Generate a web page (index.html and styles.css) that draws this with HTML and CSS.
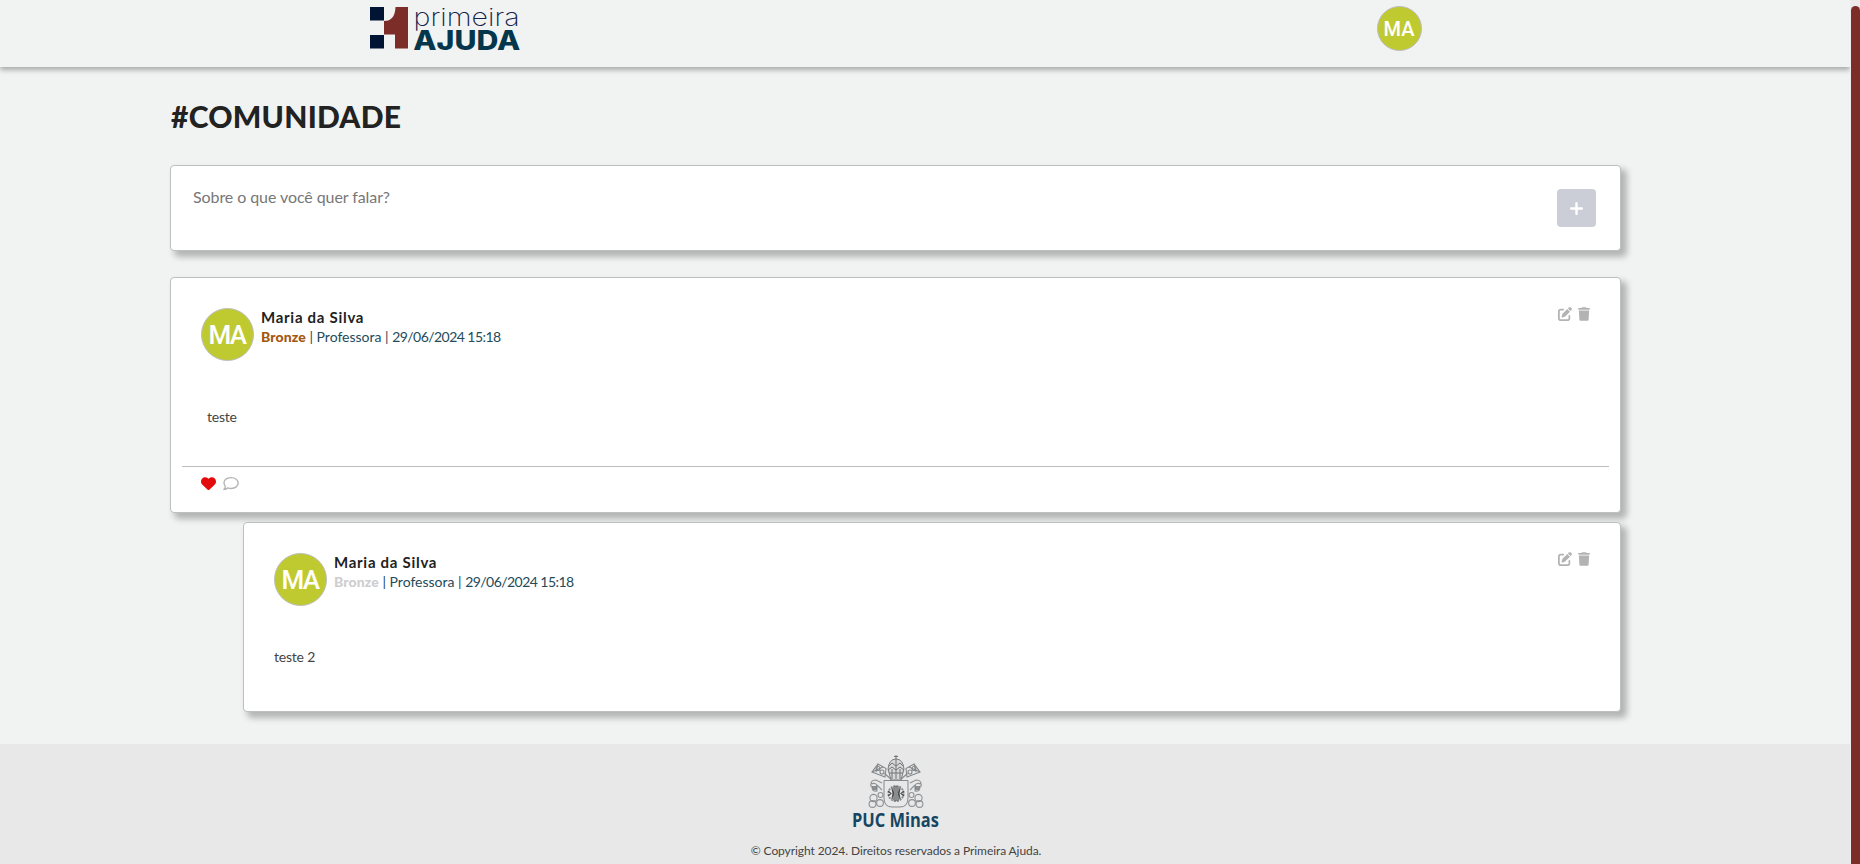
FILE: index.html
```
<!DOCTYPE html>
<html lang="pt-BR">
<head>
<meta charset="utf-8">
<title>Primeira Ajuda</title>
<link rel="stylesheet" href="styles.css">
</head>
<body>
<svg class="defs" width="0" height="0">
  <symbol id="edit" viewBox="0 0 512 512"><path d="M471.6 21.7c-21.9-21.9-57.3-21.9-79.2 0L362.3 51.7l97.9 97.9 30.1-30.1c21.9-21.9 21.9-57.3 0-79.2L471.6 21.7zm-299.2 220c-6.1 6.1-10.8 13.6-13.5 21.9l-29.6 88.8c-2.9 8.6-.6 18.1 5.8 24.6s15.9 8.7 24.6 5.8l88.8-29.6c8.2-2.7 15.7-7.4 21.9-13.5L437.7 172.3 339.7 74.3 172.4 241.7zM96 64C43 64 0 107 0 160V416c0 53 43 96 96 96H352c53 0 96-43 96-96V320c0-17.7-14.3-32-32-32s-32 14.3-32 32v96c0 17.7-14.3 32-32 32H96c-17.7 0-32-14.3-32-32V160c0-17.7 14.3-32 32-32h96c17.7 0 32-14.3 32-32s-14.3-32-32-32H96z"/></symbol>
  <symbol id="trash" viewBox="0 0 448 512"><path d="M135.2 17.7L128 32H32C14.3 32 0 46.3 0 64S14.3 96 32 96H416c17.7 0 32-14.3 32-32s-14.3-32-32-32H320l-7.2-14.3C307.4 6.8 296.3 0 284.2 0H163.8c-12.1 0-23.2 6.8-28.6 17.7zM416 128H32L53.2 467c1.6 25.3 22.6 45 47.9 45H346.9c25.3 0 46.3-19.7 47.9-45L416 128z"/></symbol>
  <g id="roundels" fill="none" stroke="#8f9294" stroke-width="1.100">
    <circle cx="5.500" cy="43" r="3.600"/><circle cx="12.500" cy="40" r="2.500"/><circle cx="4.500" cy="49" r="3.400"/><circle cx="12" cy="48" r="3.400"/>
    <path d="M3 29Q3 25 8 25L14 28M3 29Q8 27 9 31V36Q4 37 4 32Q2 31 3 29ZM9 30L14 35"/>
    <path d="M4 32H9M4.500 34H9" stroke="#6f7375" stroke-width="1.300"/>
  </g>
  <g id="key" fill="none" stroke="#85898b" stroke-width="1.100">
    <path d="M24 25L16.500 18.500M27.500 22L20 15.500M10 9L18 13.500L17 22L4 17Z"/>
    <circle cx="10" cy="13.500" r="2"/><circle cx="14" cy="17" r="2"/><path d="M10 9L8 17M4 17L15 12"/>
  </g>
</svg>
<div class="app">
  <div class="page">
    <header class="header">
      <svg class="brand" width="152" height="48" viewBox="0 0 152 48">
        <path fill="#001533" d="M0 1H14V14.500H0zM0 29H14V42.500H0z"/>
        <path fill="#7c2d27" d="M14 15Q25 15 25.500 1H38V42.500H25V28.500H14z"/>
        <text class="brand-light" x="43.500" y="19.500" textLength="106" lengthAdjust="spacingAndGlyphs">primeira</text>
        <text class="brand-bold" x="43.300" y="43.500" textLength="107" lengthAdjust="spacingAndGlyphs">AJUDA</text>
      </svg>
      <div class="avatar avatar-small">MA</div>
    </header>
    <main class="content">
      <h1 class="title">#COMUNIDADE</h1>
      <section class="card composer">
        <p class="placeholder">Sobre o que você quer falar?</p>
        <button class="add"><svg width="13" height="13" viewBox="0 0 13 13"><path d="M6.500 1.200V11.800M1.200 6.500H11.800" stroke="#fff" stroke-width="2.400" stroke-linecap="round"/></svg></button>
      </section>
      <article class="card post">
        <div class="post-head">
          <div class="avatar">MA</div>
          <div class="author"><div class="name">Maria da Silva</div><div class="meta"><b class="rank">Bronze</b> | Professora | <span class="date">29/06/2024 15:18</span></div></div>
          <div class="tools"><svg width="14" height="14"><use href="#edit"/></svg><svg width="12" height="14"><use href="#trash"/></svg></div>
        </div>
        <p class="text">teste</p>
        <div class="reactions">
          <svg width="15" height="15" viewBox="0 0 512 512" fill="#e30b0b"><path d="M47.6 300.4L228.3 469.1c7.500 7 17.400 10.900 27.700 10.900s20.200-3.900 27.700-10.900L464.400 300.400c30.400-28.300 47.600-68 47.600-109.500v-5.800c0-69.900-50.500-129.500-119.400-141C347 36.500 300.600 51.400 268 84L256 96 244 84c-32.600-32.600-79-47.500-124.600-39.900C50.500 55.600 0 115.200 0 185.100v5.800c0 41.500 17.200 81.200 47.600 109.500z"/></svg>
          <svg width="16" height="15" viewBox="0 0 16 15" fill="none" stroke="#b5b5b5" stroke-width="1.400" stroke-linejoin="round"><path d="M2.300 10.200C-.5 6.500 1.500 1.600 8.200 1.600C12.300 1.600 15.200 4 15.200 7S12.300 12.500 8.200 12.500Q6.400 12.500 4.900 11.900Q3 13.500 .9 13.500Q2.200 12 2.300 10.200Z"/></svg>
        </div>
      </article>
      <article class="card post reply">
        <div class="post-head">
          <div class="avatar">MA</div>
          <div class="author"><div class="name">Maria da Silva</div><div class="meta"><b class="rank muted">Bronze</b> | Professora | <span class="date">29/06/2024 15:18</span></div></div>
          <div class="tools"><svg width="14" height="14"><use href="#edit"/></svg><svg width="12" height="14"><use href="#trash"/></svg></div>
        </div>
        <p class="text">teste 2</p>
      </article>
    </main>
    <footer class="footer">
      <svg class="crest" width="88" height="74" viewBox="0 0 88 74">
        <g transform="translate(16 0)">
          <use href="#roundels"/><use href="#roundels" transform="translate(56 0) scale(-1 1)"/>
          <use href="#key"/><use href="#key" transform="translate(56 0) scale(-1 1)"/>
          <path d="M20 14Q21 4 28 4T36 14L33 25H23Z" fill="#d6d7d7" stroke="#7c8082"/>
          <path d="M21 11L24 8L28 11L32 8L35 11M20 15L24 12L28 15L32 12L36 15M21 18H35M28 4V24M24 14V24M32 14V24M28 0V4M26 1.500H30" fill="none" stroke="#73777a"/>
          <path d="M16 25.500H40V43Q40 52 32 52H24Q16 52 16 43Z" fill="#e8e8e8" stroke="#85898b"/>
          <circle cx="28" cy="38.500" r="7.600" fill="none" stroke="#85898b" stroke-width="1.800" stroke-dasharray="2 1"/>
          <path d="M26 31.500V45.500M28 31V46M30 31.500V45.500M24 33L25 38.500L24 44M32 33L31 38.500L32 44M20 36L23 38.500L20 41M36 36L33 38.500L36 41" fill="none" stroke="#4b4f51" stroke-width="1.200"/>
        </g>
        <text class="puc" x="0" y="72" textLength="87" lengthAdjust="spacingAndGlyphs">PUC Minas</text>
      </svg>
      <p class="copyright">© Copyright 2024. Direitos reservados a Primeira Ajuda.</p>
    </footer>
  </div>
  <div class="scroll-track"><div class="scroll-thumb"></div></div>
</div>
</body>
</html>
```
FILE: styles.css
```
* { box-sizing: border-box; }
body { margin: 0; background: #f1f3f2; font-family: Lato, "Open Sans", sans-serif; color: #222; overflow: hidden; }
h1, p { margin: 0; }
svg { display: block; flex: none; }
.defs { position: absolute; }
.brand, .crest { overflow: visible; }
.app { display: flex; height: 864px; }
.page { width: 1850px; display: flex; flex-direction: column; }
.header { height: 67px; flex: none; display: flex; justify-content: space-between; align-items: flex-start; padding: 6px 428px 0 370px; box-shadow: 0 3px 5px rgba(0,0,0,.3); }
.brand-light { font: 200 24px Inter, sans-serif; fill: #14234b; }
.brand-bold { font: 800 26.500px Inter, sans-serif; fill: #06364b; }
.avatar { width: 53px; height: 53px; flex: none; border: 1px solid #bdbdbd; border-radius: 50%; background: #bfca31; color: #fff; display: flex; align-items: center; justify-content: center; font: 500 26px Roboto, sans-serif; letter-spacing: -1.500px; padding-right: 1px; }
.avatar-small { width: 45px; height: 45px; font-size: 20px; letter-spacing: 0; }
.content { flex: 1; padding: 31px 229px 0 170px; }
.title { font-size: 30px; line-height: 36px; font-weight: 900; letter-spacing: .25px; padding-left: 1px; }
.card { background: #fff; border: 1px solid #bebfbf; border-radius: 4px; box-shadow: 5px 5px 6px 1px rgba(0,0,0,.26); }
.composer { margin-top: 31px; height: 86px; display: flex; justify-content: space-between; padding: 22px 24px 0 22px; }
.placeholder { font-size: 16px; line-height: 18px; color: #777; letter-spacing: -.08px; }
.add { width: 39px; height: 38px; margin-top: 1px; padding: 0; border: 0; border-radius: 4px; background: #cbced6; display: grid; place-items: center; }
.post { margin-top: 26px; height: 236px; padding: 30px 11px 0; display: flex; flex-direction: column; }
.post-head { display: flex; padding: 0 19px; }
.author { margin-left: 7px; flex: 1; }
.name { font-size: 15px; line-height: 19px; font-weight: 700; letter-spacing: .72px; }
.meta { font-size: 14px; line-height: 20px; color: #234b5a; white-space: nowrap; }
.rank { font-weight: 900; color: #a4560e; letter-spacing: .12px; }
.muted { color: #cecece; }
.date { letter-spacing: -.55px; }
.tools { display: flex; gap: 6px; fill: #b3b3b3; margin-top: -1px; }
.text { font-size: 14px; line-height: 20px; color: #444; margin: 46px 0 0 25px; letter-spacing: -.2px; }
.reactions { margin-top: 39px; border-top: 1px solid #bdbdbd; padding: 9px 19px 0; display: flex; gap: 7px; }
.reply { margin: 9px 0 0 73px; height: 190px; }
.reply .text { margin: 41px 0 0 19px; }
.footer { height: 120px; flex: none; background: #e8e8e8; padding: 11px 58px 0 0; display: flex; flex-direction: column; align-items: center; }
.puc { font: 700 19px "Open Sans", sans-serif; fill: #174663; }
.copyright { margin-top: 14px; font-size: 12px; line-height: 16px; color: #444; white-space: nowrap; letter-spacing: -.08px; }
.scroll-track { width: 10px; background: #ebebeb; padding: 6px 0 0 1px; }
.scroll-thumb { height: 858px; background: #7c2d27; border-radius: 5px 5px 0 0; }
```
